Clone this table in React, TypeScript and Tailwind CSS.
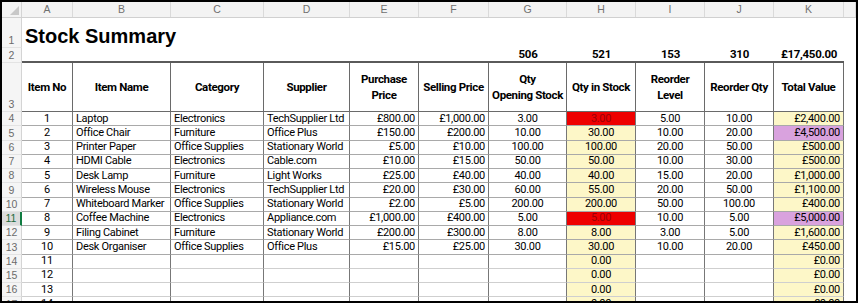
import React from "react";
import clsx from "clsx";

const cols = [
  "w-[51px]",
  "w-[98px]",
  "w-[93px]",
  "w-[86px]",
  "w-[69px]",
  "w-[70px]",
  "w-[78px]",
  "w-[69px]",
  "w-[69px]",
  "w-[69px]",
  "w-[70px]",
];
const letters = ["A", "B", "C", "D", "E", "F", "G", "H", "I", "J", "K"];
const align = [
  "justify-center",
  "justify-start",
  "justify-start",
  "justify-start",
  "justify-end",
  "justify-end",
  "justify-center",
  "justify-center",
  "justify-center",
  "justify-center",
  "justify-end",
];

const heads: React.ReactNode[] = [
  "Item No",
  "Item Name",
  "Category",
  "Supplier",
  <>Purchase<br />Price</>,
  "Selling Price",
  <>Qty<br />Opening Stock</>,
  "Qty in Stock",
  <>Reorder<br />Level</>,
  "Reorder Qty",
  "Total Value",
];

const totals = ["", "", "", "", "", "", "506", "521", "153", "310", "£17,450.00"];

const items: string[][] = [
  ["1", "Laptop", "Electronics", "TechSupplier Ltd", "£800.00", "£1,000.00", "3.00", "3.00", "5.00", "10.00", "£2,400.00"],
  ["2", "Office Chair", "Furniture", "Office Plus", "£150.00", "£200.00", "10.00", "30.00", "10.00", "20.00", "£4,500.00"],
  ["3", "Printer Paper", "Office Supplies", "Stationary World", "£5.00", "£10.00", "100.00", "100.00", "20.00", "50.00", "£500.00"],
  ["4", "HDMI Cable", "Electronics", "Cable.com", "£10.00", "£15.00", "50.00", "50.00", "10.00", "30.00", "£500.00"],
  ["5", "Desk Lamp", "Furniture", "Light Works", "£25.00", "£40.00", "40.00", "40.00", "15.00", "20.00", "£1,000.00"],
  ["6", "Wireless Mouse", "Electronics", "TechSupplier Ltd", "£20.00", "£30.00", "60.00", "55.00", "20.00", "50.00", "£1,100.00"],
  ["7", "Whiteboard Marker", "Office Supplies", "Stationary World", "£2.00", "£5.00", "200.00", "200.00", "50.00", "100.00", "£400.00"],
  ["8", "Coffee Machine", "Electronics", "Appliance.com", "£1,000.00", "£400.00", "5.00", "5.00", "10.00", "5.00", "£5,000.00"],
  ["9", "Filing Cabinet", "Furniture", "Stationary World", "£200.00", "£300.00", "8.00", "8.00", "3.00", "5.00", "£1,600.00"],
  ["10", "Desk Organiser", "Office Supplies", "Office Plus", "£15.00", "£25.00", "30.00", "30.00", "10.00", "20.00", "£450.00"],
  ["11", "", "", "", "", "", "", "0.00", "", "", "£0.00"],
  ["12", "", "", "", "", "", "", "0.00", "", "", "£0.00"],
  ["13", "", "", "", "", "", "", "0.00", "", "", "£0.00"],
  ["14", "", "", "", "", "", "", "0.00", "", "", "£0.00"],
];

const lowStock = [0, 7];
const bigValue = [1, 7];

const RowNum = ({ n, h, active }: { n: string; h: string; active?: boolean }) => (
  <div
    className={clsx(
      "w-[20px] shrink-0 flex items-end justify-center border-b border-[#e3e3e3] text-[10.5px] leading-[13px] font-['Liberation_Sans',sans-serif]",
      h,
      active
        ? "bg-[#dcdcdc] text-[#1e6b3c] border-r-2 border-r-[#107c41]"
        : "bg-[#f5f5f5] text-[#6b6b6b] border-r border-r-[#d4d4d4]"
    )}
  >
    {n}
  </div>
);

export default function App() {
  return (
    <div className="w-[858px] h-[303px] overflow-hidden border-2 border-black bg-white text-black font-[Roboto,sans-serif]">
      {/* column letters */}
      <div className="flex h-[16px] bg-[#f3f3f3] border-b border-[#d0d0d0]">
        <div className="w-[20px] shrink-0 relative border-r border-[#d4d4d4]">
          <div className="absolute right-[2px] bottom-[2px] w-0 h-0 border-l-[9px] border-l-transparent border-b-[9px] border-b-[#c8c8c8]" />
        </div>
        {letters.map((l, i) => (
          <div
            key={l}
            className={clsx(
              "shrink-0 flex items-center justify-center border-r border-[#dadada] text-[10.5px] text-[#707070] font-['Liberation_Sans',sans-serif]",
              cols[i]
            )}
          >
            {l}
          </div>
        ))}
        <div className="flex-1 border-r border-[#dadada]" />
      </div>

      {/* row 1 title */}
      <div className="flex h-[30px]">
        <RowNum n="1" h="h-[30px]" />
        <div className="flex-1 flex items-end pl-[3px]">
          <span className="text-[20px] leading-[24px] font-bold font-['Liberation_Sans',sans-serif]">Stock Summary</span>
        </div>
      </div>

      {/* row 2 totals */}
      <div className="flex h-[15px]">
        <RowNum n="2" h="h-[15px]" />
        {totals.map((t, i) => (
          <div
            key={i}
            className={clsx(
              "shrink-0 flex items-end justify-center text-[11.5px] leading-[13px] font-bold tracking-[-0.3px] border-b-2 border-[#5a5a5a]",
              cols[i]
            )}
          >
            {t}
          </div>
        ))}
      </div>

      {/* row 3 headings */}
      <div className="flex h-[49px]">
        <RowNum n="3" h="h-[49px]" />
        {heads.map((h, i) => (
          <div
            key={i}
            className={clsx(
              "shrink-0 flex items-center justify-center text-center text-[11.5px] leading-[16px] font-bold tracking-[-0.35px] border-r border-b border-[#6a6a6a] whitespace-nowrap",
              cols[i]
            )}
          >
            <span>{h}</span>
          </div>
        ))}
      </div>

      {/* data rows */}
      {items.map((row, r) => (
        <div key={r} className="flex h-[14.25px]">
          <RowNum n={String(r + 4)} h="h-[14.25px]" active={r === 7} />
          {row.map((v, i) => (
            <div
              key={i}
              className={clsx(
                "shrink-0 flex items-center px-[3px] text-[11px] leading-[14px] tracking-[-0.3px] whitespace-nowrap overflow-hidden border-r border-r-[#777777] border-b",
                r < 10 ? "border-b-[#a9a9a9]" : "border-b-[#cfcfcf]",
                cols[i],
                align[i],
                i === 7 && (lowStock.includes(r) ? "bg-[#ee0000] text-[#9c0006]" : "bg-[#fdf7c8]"),
                i === 10 && (bigValue.includes(r) ? "bg-[#d9a2de]" : "bg-[#fdf7c8]")
              )}
            >
              {v}
            </div>
          ))}
        </div>
      ))}
    </div>
  );
}
